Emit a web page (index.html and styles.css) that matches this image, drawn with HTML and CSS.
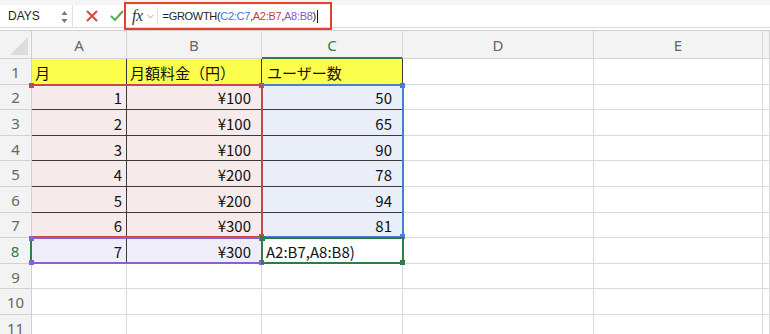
FILE: index.html
```html
<!DOCTYPE html>
<html lang="ja">
<head>
  <meta charset="UTF-8" />
  <title>GROWTH</title>
  <link rel="stylesheet" href="styles.css">
</head>
<body>
  <div class="toolbar">
    <div class="namebox">
      <span class="name">DAYS</span>
      <span class="spin">
        <svg width="7" height="14" viewBox="0 0 7 14"><path d="M0.5 5 L3.5 1 L6.5 5 Z M0.5 9 L3.5 13 L6.5 9 Z" fill="#777"/></svg>
      </span>
    </div>
    <span class="btn">
      <svg width="12" height="12" viewBox="0 0 12 12"><path d="M1.5 1.5 L10.5 10.5 M10.5 1.5 L1.5 10.5" stroke="#d9463c" stroke-width="2" stroke-linecap="round"/></svg>
    </span>
    <span class="btn ok">
      <svg width="14" height="12" viewBox="0 0 14 12"><path d="M1.5 6.5 L5 10 L12.5 1.5" fill="none" stroke="#55ad4f" stroke-width="2" stroke-linecap="round" stroke-linejoin="round"/></svg>
    </span>
    <div class="fbar">
      <span class="fx">fx</span>
      <span class="caret">
        <svg width="7" height="5" viewBox="0 0 7 5"><path d="M0.5 0.8 L3.5 4 L6.5 0.8" fill="none" stroke="#aaa" stroke-width="1"/></svg>
      </span>
      <div class="formula">=GROWTH(<span class="ref-blue">C2:C7</span>,<span class="ref-red">A2:B7</span>,<span class="ref-purple">A8:B8</span>)<span class="cursor"></span></div>
    </div>
    <div class="callout"></div>
  </div>

  <div class="sheet-wrap">
    <div class="sheet">
      <div class="c corner"><span class="tri"></span></div>
      <div class="c ch">A</div>
      <div class="c ch">B</div>
      <div class="c ch sel">C</div>
      <div class="c ch">D</div>
      <div class="c ch">E</div>
      <div class="c ch"></div>

      <div class="c rh">1</div>
      <div class="c y t">月</div>
      <div class="c y t">月額料金（円）</div>
      <div class="c y t pl">ユーザー数</div>
      <div class="c"></div><div class="c"></div><div class="c"></div>

      <div class="c rh">2</div>
      <div class="c pk t num">1</div>
      <div class="c pk t num wide">¥100</div>
      <div class="c bl t num wide">50</div>
      <div class="c"></div><div class="c"></div><div class="c"></div>

      <div class="c rh">3</div>
      <div class="c pk t num">2</div>
      <div class="c pk t num wide">¥100</div>
      <div class="c bl t num wide">65</div>
      <div class="c"></div><div class="c"></div><div class="c"></div>

      <div class="c rh">4</div>
      <div class="c pk t num">3</div>
      <div class="c pk t num wide">¥100</div>
      <div class="c bl t num wide">90</div>
      <div class="c"></div><div class="c"></div><div class="c"></div>

      <div class="c rh">5</div>
      <div class="c pk t num">4</div>
      <div class="c pk t num wide">¥200</div>
      <div class="c bl t num wide">78</div>
      <div class="c"></div><div class="c"></div><div class="c"></div>

      <div class="c rh">6</div>
      <div class="c pk t num">5</div>
      <div class="c pk t num wide">¥200</div>
      <div class="c bl t num wide">94</div>
      <div class="c"></div><div class="c"></div><div class="c"></div>

      <div class="c rh">7</div>
      <div class="c pk t num">6</div>
      <div class="c pk t num wide">¥300</div>
      <div class="c bl t num wide">81</div>
      <div class="c"></div><div class="c"></div><div class="c"></div>

      <div class="c rh sel">8</div>
      <div class="c lv t num">7</div>
      <div class="c lv t num wide">¥300</div>
      <div class="c edit">A2:B7,A8:B8)</div>
      <div class="c"></div><div class="c"></div><div class="c"></div>

      <div class="c rh">9</div>
      <div class="c"></div><div class="c"></div><div class="c"></div><div class="c"></div><div class="c"></div><div class="c"></div>
      <div class="c rh">10</div>
      <div class="c"></div><div class="c"></div><div class="c"></div><div class="c"></div><div class="c"></div><div class="c"></div>
      <div class="c rh">11</div>
      <div class="c"></div><div class="c"></div><div class="c"></div><div class="c"></div><div class="c"></div><div class="c"></div>
    </div>

    <!-- range highlights drawn over the cells -->
    <div class="sheet marks">
      <div class="range r-red"><i class="h tl"></i><i class="h tr"></i><i class="h br"></i></div>
      <div class="range r-blue"><i class="h tr"></i><i class="h br"></i></div>
      <div class="range r-purple"><i class="h tl"></i><i class="h tr"></i><i class="h bl"></i><i class="h br"></i></div>
      <div class="range r-green"><i class="h tl"></i><i class="h br"></i></div>
    </div>
  </div>
</body>
</html>
```

FILE: styles.css
```css
body {
  margin: 0;
  background: #fff;
  font-family: "Noto Sans CJK JP", "Noto Sans", sans-serif;
  color: #111;
  overflow: hidden;
}

/* formula bar */
.toolbar {
  position: relative;
  height: 28px;
  display: flex;
  align-items: center;
  border-top: 5px solid #f4f4f4;
  border-bottom: 1px solid #d8d8d8;
  box-sizing: border-box;
}

.namebox {
  width: 73px;
  height: 22px;
  display: flex;
  align-items: center;
  justify-content: space-between;
  padding: 0 4px 0 8px;
  box-sizing: border-box;
  border-right: 1px solid #e2e2e2;
}

.name {
  font-family: "Liberation Sans", Arial, sans-serif;
  font-size: 12px;
  color: #222;
}

.spin {
  display: flex;
  margin-top: 1px;
}

.btn {
  display: flex;
  margin-left: 13px;
}

.btn.ok {
  margin-left: 12px;
}

.fbar {
  flex: 1;
  display: flex;
  align-items: center;
  height: 22px;
  margin-left: 8px;
}

.fx {
  font-family: "Liberation Serif", "DejaVu Serif", serif;
  font-style: italic;
  font-size: 16px;
  color: #333;
  letter-spacing: -0.5px;
}

.caret {
  display: flex;
  margin-left: 4px;
  padding-right: 3px;
  border-right: 1px solid #e0e0e0;
  height: 18px;
  align-items: center;
}

.formula {
  font-family: "Liberation Sans", Arial, sans-serif;
  font-size: 11px;
  letter-spacing: -0.3px;
  color: #222;
  padding-left: 5px;
  display: flex;
  align-items: center;
}

.ref-blue { color: #3d74d4; }
.ref-red { color: #c23c3c; }
.ref-purple { color: #8757c9; }

.cursor {
  display: inline-block;
  width: 1px;
  height: 13px;
  background: #111;
  margin-left: 1px;
}

.callout {
  position: absolute;
  left: 124px;
  top: -3px;
  width: 208px;
  height: 28px;
  border: 2.5px solid #e8402a;
  box-sizing: border-box;
}

/* grid */
.sheet-wrap {
  position: relative;
  margin-top: 2px;
  border-top: 1px solid #d2d2d2;
}

.sheet {
  display: grid;
  grid-template-columns: 32px 95px 135px 141px 191px 169px 1fr;
  grid-template-rows: 28px repeat(11, 25.6px);
}

.marks {
  position: absolute;
  inset: 0;
  pointer-events: none;
}

.c {
  border-right: 1px solid #dadada;
  border-bottom: 1px solid #dadada;
  box-sizing: border-box;
  font-size: 15px;
  line-height: 1;
  display: flex;
  align-items: center;
  padding: 2px 3px 0;
  white-space: nowrap;
  overflow: hidden;
}

.corner {
  background: #f3f3f3;
  position: relative;
  border-color: #d0d0d0;
}

.tri {
  position: absolute;
  right: 3px;
  bottom: 3px;
  width: 0;
  height: 0;
  border-left: 18px solid transparent;
  border-bottom: 18px solid #dcdcdc;
}

.ch {
  background: #f3f3f3;
  color: #666;
  justify-content: center;
  border-color: #d4d4d4;
  font-family: "Noto Sans", sans-serif;
}

.ch.sel {
  color: #2c7a46;
  border-bottom: 2px solid #2f7d47;
}

.rh {
  background: #f3f3f3;
  color: #666;
  justify-content: center;
  border-color: #d0d0d0;
  font-family: "Noto Sans", sans-serif;
  padding: 2px 0 0;
}

.rh.sel {
  color: #2c7a46;
  border-right: 2px solid #2f7d47;
}

.y { background: #fdfd4b; }
.pk { background: #f6ebea; }
.bl { background: #e9eef8; }
.lv { background: #efedf8; }

.t {
  border-color: #3a3a3a;
}

.pl {
  padding-left: 5px;
}

.num {
  justify-content: flex-end;
  padding-right: 4px;
}

.num.wide {
  padding-right: 10px;
}

.edit {
  padding-left: 4px;
}

.range {
  position: relative;
  border: 2px solid;
  margin: -1px -1px 0 0;
  box-sizing: border-box;
}

.r-red {
  grid-area: 3 / 2 / 9 / 4;
  border-color: #c24a4a;
  border-left-width: 0;
}

.r-blue {
  grid-area: 3 / 4 / 9 / 5;
  border-color: #4a7dd5;
  border-left-width: 0;
}

.r-purple {
  grid-area: 9 / 2 / 10 / 4;
  border-color: #8a5fd1;
  border-left-width: 0;
}

.r-green {
  grid-area: 9 / 4 / 10 / 5;
  border-color: #2f7a45;
  margin-left: -1px;
}

.h {
  position: absolute;
  width: 5px;
  height: 5px;
}

.r-red .h { background: #c24a4a; }
.r-blue .h { background: #4a7dd5; }
.r-purple .h { background: #8a5fd1; }
.r-green .h { background: #2f7a45; }

.h.tl { top: -3px; left: -3px; }
.h.tr { top: -3px; right: -3px; }
.h.bl { bottom: -3px; left: -3px; }
.h.br { bottom: -3px; right: -3px; }
```
